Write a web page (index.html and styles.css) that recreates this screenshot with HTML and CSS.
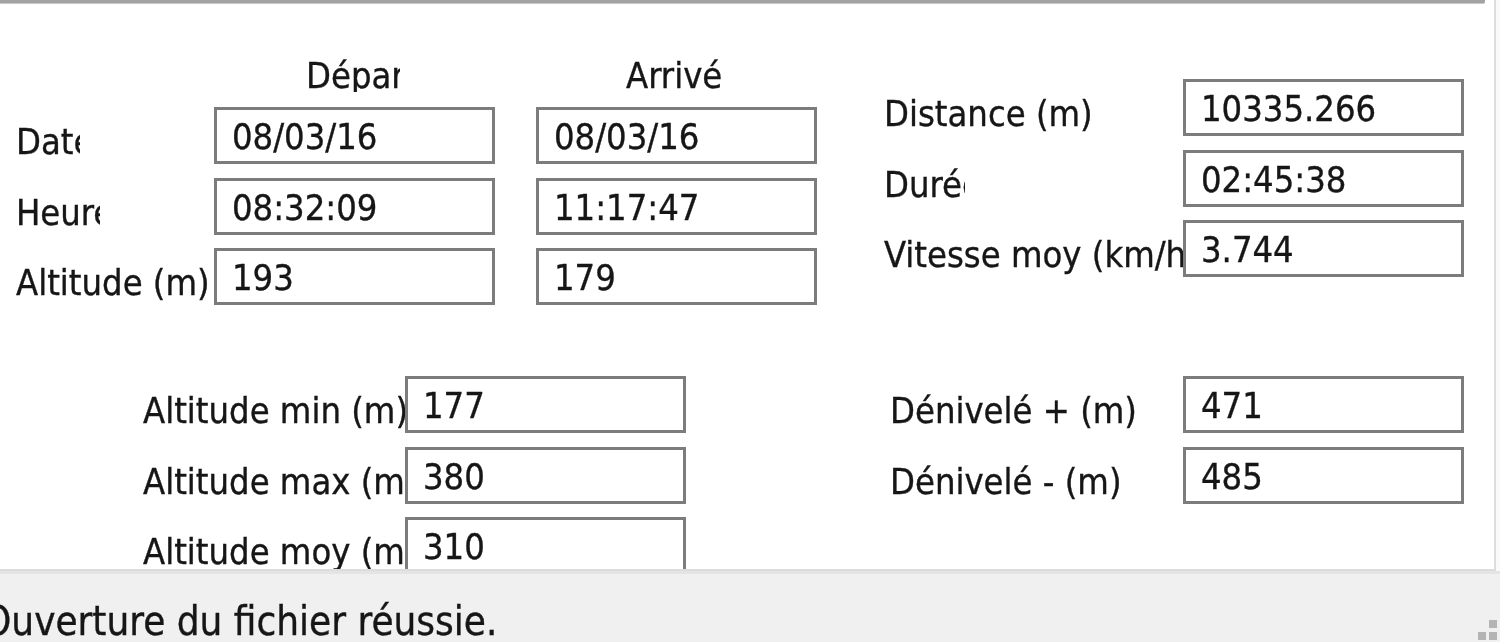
FILE: index.html
```html
<!DOCTYPE html>
<html lang="fr">
<head>
    <meta charset="UTF-8">
    <title>Trace GPS</title>
    <link rel="stylesheet" href="styles.css">
</head>
<body>
    <div class="window">
        <!-- client area with the trace summary -->
        <div class="panel">
            <div class="chart-edge"></div>
            <div class="panel-body">

                <!-- depart / arrivee -->
                <div class="trip">
                    <div></div>
                    <div class="col-head"><span class="head head-dep">Départ</span></div>
                    <div class="col-head"><span class="head head-arr">Arrivée</span></div>

                    <div class="lbl lbl-date">Date</div>
                    <div class="field">08/03/16</div>
                    <div class="field arr">08/03/16</div>

                    <div class="lbl lbl-heure">Heure</div>
                    <div class="field">08:32:09</div>
                    <div class="field arr">11:17:47</div>

                    <div class="lbl">Altitude (m)</div>
                    <div class="field">193</div>
                    <div class="field arr">179</div>
                </div>

                <!-- distance, duree, vitesse -->
                <div class="stats">
                    <div class="lbl">Distance (m)</div>
                    <div class="field">10335.266</div>

                    <div class="lbl lbl-duree">Durée</div>
                    <div class="field">02:45:38</div>

                    <div class="lbl">Vitesse moy (km/h)</div>
                    <div class="field">3.744</div>
                </div>

                <!-- altitudes -->
                <div class="alt">
                    <div class="lbl">Altitude min (m)</div>
                    <div class="field">177</div>

                    <div class="lbl">Altitude max (m)</div>
                    <div class="field">380</div>

                    <div class="lbl">Altitude moy (m)</div>
                    <div class="field">310</div>
                </div>

                <!-- denivele -->
                <div class="deniv">
                    <div class="lbl">Dénivelé + (m)</div>
                    <div class="field">471</div>

                    <div class="lbl">Dénivelé - (m)</div>
                    <div class="field">485</div>
                </div>

            </div>
        </div>

        <!-- status bar -->
        <div class="status">
            <span class="status-text">Ouverture du fichier réussie.</span>
            <span class="grip">
                <i></i><i></i><i></i>
            </span>
        </div>
    </div>
</body>
</html>
```

FILE: styles.css
```css
body {
    margin: 0;
    width: 1500px;
    height: 642px;
    overflow: hidden;
    background-color: #fafafa;
    font-family: "DejaVu Sans Condensed", "DejaVu Sans", sans-serif;
    font-stretch: condensed;
    font-size: 36px;
    color: #161616;
    -webkit-text-stroke: 0.35px #161616;
}

.window {
    display: flex;
    flex-direction: column;
    height: 642px;
    filter: blur(0.6px);
}

/* white client area */
.panel {
    height: 569px;
    width: 1494px;
    background-color: #ffffff;
    border-right: 2px solid #dcdcdc;
    border-bottom: 2px solid #dcdcdc;
    overflow: hidden;
    flex-shrink: 0;
}

/* bottom edge of the chart above */
.chart-edge {
    width: 1485px;
    height: 3px;
    border-bottom: 1px solid #c8c8c8;
    background-color: #a2a2a2;
    border-bottom-right-radius: 2px;
}

.panel-body {
    display: grid;
    grid-template-columns: 868px 1fr;
    padding-left: 16px;
}

.lbl {
    white-space: nowrap;
    overflow: hidden;
    line-height: 57px;
    height: 57px;
    margin-top: 6px;
}

.field {
    box-sizing: border-box;
    height: 57px;
    width: 281px;
    border: 3px solid #7c7c7c;
    background-color: #ffffff;
    padding-left: 15px;
    padding-top: 1px;
    line-height: 51px;
    white-space: nowrap;
}

/* depart / arrivee block */
.trip {
    display: grid;
    grid-template-columns: 198px 281px 322px;
    grid-template-rows: 36px 57px 57px 57px;
    row-gap: 13.5px;
    margin-top: 53.5px;
    align-items: start;
}

.trip .field.arr {
    margin-left: 41px;
}

.col-head {
    height: 36px;
}

.head {
    display: block;
    white-space: nowrap;
    overflow: hidden;
    height: 34.5px;
    line-height: 36px;
}

.head-dep {
    margin-left: 92px;
    width: 94px;
}

.head-arr {
    margin-left: 131px;
    width: 97px;
}

.lbl-date {
    width: 64px;
}

.lbl-heure {
    width: 84px;
}

/* distance block */
.stats {
    display: grid;
    grid-template-columns: 299px 281px;
    grid-auto-rows: 57px;
    row-gap: 13.5px;
    margin-top: 75px;
    align-content: start;
}

.lbl-duree {
    width: 81px;
}

/* altitudes block */
.alt {
    display: grid;
    grid-template-columns: 262px 281px;
    grid-auto-rows: 57px;
    row-gap: 13.5px;
    margin-top: 71px;
    margin-left: 127px;
}

.deniv {
    display: grid;
    grid-template-columns: 293px 281px;
    grid-auto-rows: 57px;
    row-gap: 13.5px;
    margin-top: 71px;
    margin-left: 6px;
    align-content: start;
}

/* status bar */
.status {
    position: relative;
    flex: 1;
    background-color: #f0f0f0;
    border-top: 3px solid #e4e4e4;
    overflow: hidden;
    padding-top: 15px;
    font-size: 40px;
    line-height: 64px;
    white-space: nowrap;
}

.status-text {
    margin-left: -17px;
}

.grip {
    position: absolute;
    right: 3px;
    bottom: 2px;
    width: 19px;
    height: 20px;
}

.grip i {
    position: absolute;
    width: 8px;
    height: 8px;
    background-color: #b4b4b4;
}

.grip i:nth-child(1) {
    right: 0;
    top: 0;
}

.grip i:nth-child(2) {
    right: 11px;
    bottom: 0;
}

.grip i:nth-child(3) {
    right: 0;
    bottom: 0;
}
```
